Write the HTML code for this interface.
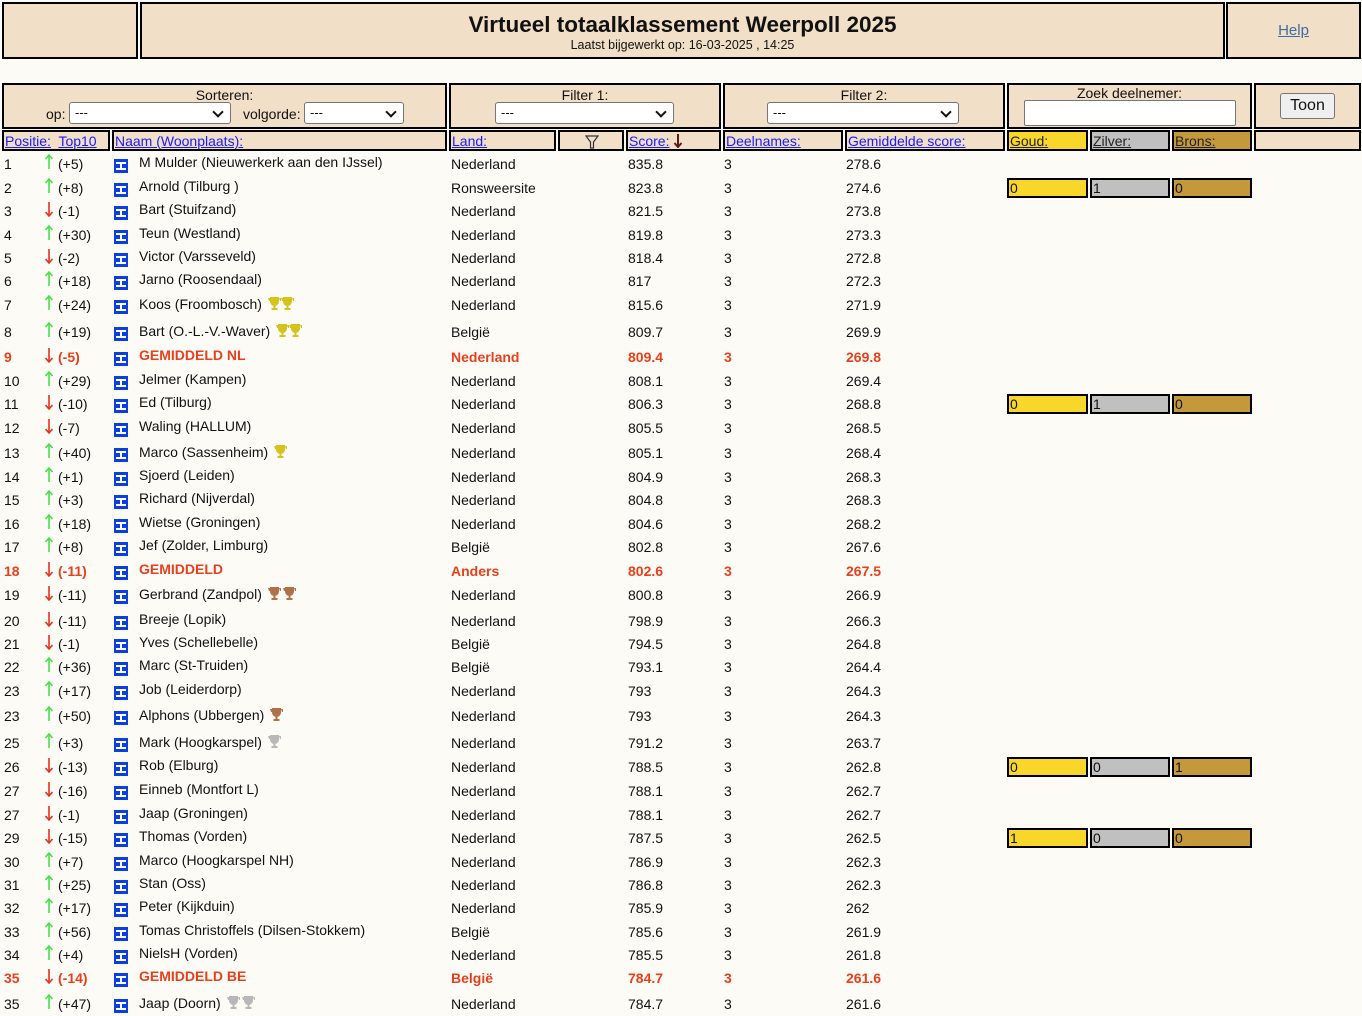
<!DOCTYPE html>
<html><head><meta charset="utf-8">
<style>
*{margin:0;padding:0;box-sizing:border-box}
body{width:1362px;height:1016px;background:#fdfbf6;font-family:"Liberation Sans",Arial,sans-serif;font-size:14px;color:#111;position:relative;overflow:hidden}
.bx{position:absolute;background:#f1dfc7;border:2px solid #000}
.hb{position:absolute;background:#f1dfc7;border:2px solid #000;height:21px;top:130px;padding-left:1px;line-height:19px}
a{color:#1a1aff;text-decoration:underline}
.sel{position:absolute;background:#fff;border:1px solid #767676;border-radius:3px;height:22px;font-size:13px;line-height:20px;padding-left:5px}
.sel:after{content:"";position:absolute;right:8px;top:5px;width:6px;height:6px;border-right:2px solid #111;border-bottom:2px solid #111;transform:rotate(45deg)}
.inp{position:absolute;background:#fff;border:1px solid #767676;border-radius:2px}
.r{position:absolute;left:0;width:1362px;height:20px;line-height:20px}
.r b{font-weight:normal;position:absolute;white-space:nowrap}
.p{left:4px}.c{left:58px}.n{left:139px}.l{left:451px}.s{left:628px}.d{left:724px}.g{left:846px}
.ic{position:absolute;left:114px;top:5px;width:14px;height:14px}
.ar{position:absolute;left:44px;top:0;width:10px;height:16px}
.red{color:#e8401c}.red b{font-weight:bold!important}
.m{position:absolute;border:2px solid #000;height:20px;top:0;line-height:16px;padding-left:1px;font-size:14px}
.m1{left:1007px;width:81px;background:#f9d62a}.m2{left:1090px;width:80px;background:#c0c0c0}.m3{left:1172px;width:80px;background:#c4993c}
.tr{display:inline-block;width:13px;height:15px;vertical-align:-2px;margin-left:2px}
</style></head><body>
<svg width="0" height="0" style="position:absolute">
<defs>
<symbol id="ico" viewBox="0 0 14 14"><rect width="14" height="14" fill="#0b3fe0"/><path d="M2 3h10v2H8v4h4v2H2V9h4V5H2z" fill="#fff"/></symbol>
<symbol id="up" viewBox="0 0 10 16"><path d="M5 1v14M1.5 5L5 1l3.5 4" stroke="#4be04b" stroke-width="1.6" fill="none"/></symbol>
<symbol id="dn" viewBox="0 0 10 16"><path d="M5 1v14M1.5 11L5 15l3.5-4" stroke="#e53322" stroke-width="1.6" fill="none"/></symbol>
<symbol id="tg" viewBox="0 0 13 15"><path d="M2 1h9v4c0 3-2 5-4.5 5S2 8 2 5zM0 2h2v3H1zM11 2h2v3h-1zM5.5 10h2v2h2v2h-6v-2h2z" fill="#d6c21c"/></symbol>
<symbol id="tb" viewBox="0 0 13 15"><path d="M2 1h9v4c0 3-2 5-4.5 5S2 8 2 5zM0 2h2v3H1zM11 2h2v3h-1zM5.5 10h2v2h2v2h-6v-2h2z" fill="#b0704a"/></symbol>
<symbol id="ts" viewBox="0 0 13 15"><path d="M2 1h9v4c0 3-2 5-4.5 5S2 8 2 5zM0 2h2v3H1zM11 2h2v3h-1zM5.5 10h2v2h2v2h-6v-2h2z" fill="#b8b8b8"/></symbol>
</defs></svg>

<div class="bx" style="left:2px;top:2px;width:136px;height:57px"></div>
<div class="bx" style="left:140px;top:2px;width:1085px;height:57px;text-align:center">
<div style="font-size:22.5px;font-weight:bold;margin-top:8px;line-height:26px">Virtueel totaalklassement Weerpoll 2025</div>
<div style="font-size:12.5px;line-height:14px">Laatst bijgewerkt op: 16-03-2025 , 14:25</div></div>
<div class="bx" style="left:1226px;top:2px;width:135px;height:57px;text-align:center;line-height:54px;font-size:15px"><a style="color:#3a6ea5">Help</a></div>

<div class="bx" style="left:2px;top:83px;width:445px;height:46px;text-align:center;line-height:20px;padding-top:0">Sorteren:</div>
<div style="position:absolute;left:46px;top:104px;line-height:20px">op:</div>
<div class="sel" style="left:69px;top:102px;width:162px">---</div>
<div style="position:absolute;left:243px;top:104px;line-height:20px">volgorde:</div>
<div class="sel" style="left:304px;top:102px;width:100px">---</div>
<div class="bx" style="left:449px;top:83px;width:272px;height:46px;text-align:center;line-height:20px;padding-top:0">Filter 1:</div>
<div class="sel" style="left:495px;top:102px;width:179px">---</div>
<div class="bx" style="left:723px;top:83px;width:282px;height:46px;text-align:center;line-height:20px;padding-top:0">Filter 2:</div>
<div class="sel" style="left:767px;top:102px;width:192px">---</div>
<div class="bx" style="left:1007px;top:83px;width:245px;height:46px;text-align:center;line-height:17px">Zoek deelnemer:</div>
<div class="inp" style="left:1024px;top:100px;width:212px;height:26px"></div>
<div class="bx" style="left:1254px;top:83px;width:107px;height:46px"></div>
<div style="position:absolute;left:1280px;top:93px;width:55px;height:26px;background:#efefef;border:1px solid #767676;border-radius:3px;text-align:center;line-height:24px;font-size:16px">Toon</div>

<div class="hb" style="left:2px;width:108px"><a>Positie:</a>&nbsp; <a>Top10</a></div>
<div class="hb" style="left:112px;width:335px"><a>Naam (Woonplaats):</a></div>
<div class="hb" style="left:449px;width:107px"><a>Land:</a></div>
<div class="hb" style="left:558px;width:66px"><svg style="position:absolute;left:25px;top:3px" width="14" height="14" viewBox="0 0 14 14"><path d="M1 1h12L8.5 7v6h-3V7z" fill="none" stroke="#333" stroke-width="1.2"/></svg></div>
<div class="hb" style="left:626px;width:95px"><a>Score:</a> <svg style="vertical-align:-2px" width="10" height="14" viewBox="0 0 10 14"><path d="M5 0v13M1.5 9L5 13l3.5-4" stroke="#5a1b1b" stroke-width="2" fill="none"/></svg></div>
<div class="hb" style="left:723px;width:120px"><a>Deelnames:</a></div>
<div class="hb" style="left:845px;width:160px"><a>Gemiddelde score:</a></div>
<div class="hb" style="left:1007px;width:81px;background:#f9d62a"><a style="color:#222">Goud:</a></div>
<div class="hb" style="left:1090px;width:80px;background:#c0c0c0"><a style="color:#222">Zilver:</a></div>
<div class="hb" style="left:1172px;width:80px;background:#c4993c"><a style="color:#222">Brons:</a></div>
<div class="hb" style="left:1254px;width:107px"></div>

<div class="r" style="top:154px"><b class=p>1</b><svg class=ar><use href="#up"/></svg><b class=c>(+5)</b><svg class=ic><use href="#ico"/></svg><b class=n style="top:-2px">M Mulder (Nieuwerkerk aan den IJssel)</b><b class=l>Nederland</b><b class=s>835.8</b><b class=d>3</b><b class=g>278.6</b></div>
<div class="r" style="top:178px"><b class=p>2</b><svg class=ar><use href="#up"/></svg><b class=c>(+8)</b><svg class=ic><use href="#ico"/></svg><b class=n style="top:-2px">Arnold (Tilburg )</b><b class=l>Ronsweersite</b><b class=s>823.8</b><b class=d>3</b><b class=g>274.6</b><div class="m m1">0</div><div class="m m2">1</div><div class="m m3">0</div></div>
<div class="r" style="top:201px"><b class=p>3</b><svg class=ar><use href="#dn"/></svg><b class=c>(-1)</b><svg class=ic><use href="#ico"/></svg><b class=n style="top:-2px">Bart (Stuifzand)</b><b class=l>Nederland</b><b class=s>821.5</b><b class=d>3</b><b class=g>273.8</b></div>
<div class="r" style="top:225px"><b class=p>4</b><svg class=ar><use href="#up"/></svg><b class=c>(+30)</b><svg class=ic><use href="#ico"/></svg><b class=n style="top:-2px">Teun (Westland)</b><b class=l>Nederland</b><b class=s>819.8</b><b class=d>3</b><b class=g>273.3</b></div>
<div class="r" style="top:248px"><b class=p>5</b><svg class=ar><use href="#dn"/></svg><b class=c>(-2)</b><svg class=ic><use href="#ico"/></svg><b class=n style="top:-2px">Victor (Varsseveld)</b><b class=l>Nederland</b><b class=s>818.4</b><b class=d>3</b><b class=g>272.8</b></div>
<div class="r" style="top:271px"><b class=p>6</b><svg class=ar><use href="#up"/></svg><b class=c>(+18)</b><svg class=ic><use href="#ico"/></svg><b class=n style="top:-2px">Jarno (Roosendaal)</b><b class=l>Nederland</b><b class=s>817</b><b class=d>3</b><b class=g>272.3</b></div>
<div class="r" style="top:295px"><b class=p>7</b><svg class=ar><use href="#up"/></svg><b class=c>(+24)</b><svg class=ic><use href="#ico"/></svg><b class=n style="top:-1px">Koos (Froombosch) <svg class=tr><use href="#tg"/></svg><svg class=tr style="margin-left:0"><use href="#tg"/></svg></b><b class=l>Nederland</b><b class=s>815.6</b><b class=d>3</b><b class=g>271.9</b></div>
<div class="r" style="top:322px"><b class=p>8</b><svg class=ar><use href="#up"/></svg><b class=c>(+19)</b><svg class=ic><use href="#ico"/></svg><b class=n style="top:-1px">Bart (O.-L.-V.-Waver) <svg class=tr><use href="#tg"/></svg><svg class=tr style="margin-left:0"><use href="#tg"/></svg></b><b class=l>België</b><b class=s>809.7</b><b class=d>3</b><b class=g>269.9</b></div>
<div class="r red" style="top:347px"><b class=p>9</b><svg class=ar><use href="#dn"/></svg><b class=c>(-5)</b><svg class=ic><use href="#ico"/></svg><b class=n style="top:-2px">GEMIDDELD NL</b><b class=l>Nederland</b><b class=s>809.4</b><b class=d>3</b><b class=g>269.8</b></div>
<div class="r" style="top:371px"><b class=p>10</b><svg class=ar><use href="#up"/></svg><b class=c>(+29)</b><svg class=ic><use href="#ico"/></svg><b class=n style="top:-2px">Jelmer (Kampen)</b><b class=l>Nederland</b><b class=s>808.1</b><b class=d>3</b><b class=g>269.4</b></div>
<div class="r" style="top:394px"><b class=p>11</b><svg class=ar><use href="#dn"/></svg><b class=c>(-10)</b><svg class=ic><use href="#ico"/></svg><b class=n style="top:-2px">Ed (Tilburg)</b><b class=l>Nederland</b><b class=s>806.3</b><b class=d>3</b><b class=g>268.8</b><div class="m m1">0</div><div class="m m2">1</div><div class="m m3">0</div></div>
<div class="r" style="top:418px"><b class=p>12</b><svg class=ar><use href="#dn"/></svg><b class=c>(-7)</b><svg class=ic><use href="#ico"/></svg><b class=n style="top:-2px">Waling (HALLUM)</b><b class=l>Nederland</b><b class=s>805.5</b><b class=d>3</b><b class=g>268.5</b></div>
<div class="r" style="top:443px"><b class=p>13</b><svg class=ar><use href="#up"/></svg><b class=c>(+40)</b><svg class=ic><use href="#ico"/></svg><b class=n style="top:-1px">Marco (Sassenheim) <svg class=tr><use href="#tg"/></svg></b><b class=l>Nederland</b><b class=s>805.1</b><b class=d>3</b><b class=g>268.4</b></div>
<div class="r" style="top:467px"><b class=p>14</b><svg class=ar><use href="#up"/></svg><b class=c>(+1)</b><svg class=ic><use href="#ico"/></svg><b class=n style="top:-2px">Sjoerd (Leiden)</b><b class=l>Nederland</b><b class=s>804.9</b><b class=d>3</b><b class=g>268.3</b></div>
<div class="r" style="top:490px"><b class=p>15</b><svg class=ar><use href="#up"/></svg><b class=c>(+3)</b><svg class=ic><use href="#ico"/></svg><b class=n style="top:-2px">Richard (Nijverdal)</b><b class=l>Nederland</b><b class=s>804.8</b><b class=d>3</b><b class=g>268.3</b></div>
<div class="r" style="top:514px"><b class=p>16</b><svg class=ar><use href="#up"/></svg><b class=c>(+18)</b><svg class=ic><use href="#ico"/></svg><b class=n style="top:-2px">Wietse (Groningen)</b><b class=l>Nederland</b><b class=s>804.6</b><b class=d>3</b><b class=g>268.2</b></div>
<div class="r" style="top:537px"><b class=p>17</b><svg class=ar><use href="#up"/></svg><b class=c>(+8)</b><svg class=ic><use href="#ico"/></svg><b class=n style="top:-2px">Jef (Zolder, Limburg)</b><b class=l>België</b><b class=s>802.8</b><b class=d>3</b><b class=g>267.6</b></div>
<div class="r red" style="top:561px"><b class=p>18</b><svg class=ar><use href="#dn"/></svg><b class=c>(-11)</b><svg class=ic><use href="#ico"/></svg><b class=n style="top:-2px">GEMIDDELD</b><b class=l>Anders</b><b class=s>802.6</b><b class=d>3</b><b class=g>267.5</b></div>
<div class="r" style="top:585px"><b class=p>19</b><svg class=ar><use href="#dn"/></svg><b class=c>(-11)</b><svg class=ic><use href="#ico"/></svg><b class=n style="top:-1px">Gerbrand (Zandpol) <svg class=tr><use href="#tb"/></svg><svg class=tr><use href="#tb"/></svg></b><b class=l>Nederland</b><b class=s>800.8</b><b class=d>3</b><b class=g>266.9</b></div>
<div class="r" style="top:611px"><b class=p>20</b><svg class=ar><use href="#dn"/></svg><b class=c>(-11)</b><svg class=ic><use href="#ico"/></svg><b class=n style="top:-2px">Breeje (Lopik)</b><b class=l>Nederland</b><b class=s>798.9</b><b class=d>3</b><b class=g>266.3</b></div>
<div class="r" style="top:634px"><b class=p>21</b><svg class=ar><use href="#dn"/></svg><b class=c>(-1)</b><svg class=ic><use href="#ico"/></svg><b class=n style="top:-2px">Yves (Schellebelle)</b><b class=l>België</b><b class=s>794.5</b><b class=d>3</b><b class=g>264.8</b></div>
<div class="r" style="top:657px"><b class=p>22</b><svg class=ar><use href="#up"/></svg><b class=c>(+36)</b><svg class=ic><use href="#ico"/></svg><b class=n style="top:-2px">Marc (St-Truiden)</b><b class=l>België</b><b class=s>793.1</b><b class=d>3</b><b class=g>264.4</b></div>
<div class="r" style="top:681px"><b class=p>23</b><svg class=ar><use href="#up"/></svg><b class=c>(+17)</b><svg class=ic><use href="#ico"/></svg><b class=n style="top:-2px">Job (Leiderdorp)</b><b class=l>Nederland</b><b class=s>793</b><b class=d>3</b><b class=g>264.3</b></div>
<div class="r" style="top:706px"><b class=p>23</b><svg class=ar><use href="#up"/></svg><b class=c>(+50)</b><svg class=ic><use href="#ico"/></svg><b class=n style="top:-1px">Alphons (Ubbergen) <svg class=tr><use href="#tb"/></svg></b><b class=l>Nederland</b><b class=s>793</b><b class=d>3</b><b class=g>264.3</b></div>
<div class="r" style="top:733px"><b class=p>25</b><svg class=ar><use href="#up"/></svg><b class=c>(+3)</b><svg class=ic><use href="#ico"/></svg><b class=n style="top:-1px">Mark (Hoogkarspel) <svg class=tr><use href="#ts"/></svg></b><b class=l>Nederland</b><b class=s>791.2</b><b class=d>3</b><b class=g>263.7</b></div>
<div class="r" style="top:757px"><b class=p>26</b><svg class=ar><use href="#dn"/></svg><b class=c>(-13)</b><svg class=ic><use href="#ico"/></svg><b class=n style="top:-2px">Rob (Elburg)</b><b class=l>Nederland</b><b class=s>788.5</b><b class=d>3</b><b class=g>262.8</b><div class="m m1">0</div><div class="m m2">0</div><div class="m m3">1</div></div>
<div class="r" style="top:781px"><b class=p>27</b><svg class=ar><use href="#dn"/></svg><b class=c>(-16)</b><svg class=ic><use href="#ico"/></svg><b class=n style="top:-2px">Einneb (Montfort L)</b><b class=l>Nederland</b><b class=s>788.1</b><b class=d>3</b><b class=g>262.7</b></div>
<div class="r" style="top:805px"><b class=p>27</b><svg class=ar><use href="#dn"/></svg><b class=c>(-1)</b><svg class=ic><use href="#ico"/></svg><b class=n style="top:-2px">Jaap (Groningen)</b><b class=l>Nederland</b><b class=s>788.1</b><b class=d>3</b><b class=g>262.7</b></div>
<div class="r" style="top:828px"><b class=p>29</b><svg class=ar><use href="#dn"/></svg><b class=c>(-15)</b><svg class=ic><use href="#ico"/></svg><b class=n style="top:-2px">Thomas (Vorden)</b><b class=l>Nederland</b><b class=s>787.5</b><b class=d>3</b><b class=g>262.5</b><div class="m m1">1</div><div class="m m2">0</div><div class="m m3">0</div></div>
<div class="r" style="top:852px"><b class=p>30</b><svg class=ar><use href="#up"/></svg><b class=c>(+7)</b><svg class=ic><use href="#ico"/></svg><b class=n style="top:-2px">Marco (Hoogkarspel NH)</b><b class=l>Nederland</b><b class=s>786.9</b><b class=d>3</b><b class=g>262.3</b></div>
<div class="r" style="top:875px"><b class=p>31</b><svg class=ar><use href="#up"/></svg><b class=c>(+25)</b><svg class=ic><use href="#ico"/></svg><b class=n style="top:-2px">Stan (Oss)</b><b class=l>Nederland</b><b class=s>786.8</b><b class=d>3</b><b class=g>262.3</b></div>
<div class="r" style="top:898px"><b class=p>32</b><svg class=ar><use href="#up"/></svg><b class=c>(+17)</b><svg class=ic><use href="#ico"/></svg><b class=n style="top:-2px">Peter (Kijkduin)</b><b class=l>Nederland</b><b class=s>785.9</b><b class=d>3</b><b class=g>262</b></div>
<div class="r" style="top:922px"><b class=p>33</b><svg class=ar><use href="#up"/></svg><b class=c>(+56)</b><svg class=ic><use href="#ico"/></svg><b class=n style="top:-2px">Tomas Christoffels (Dilsen-Stokkem)</b><b class=l>België</b><b class=s>785.6</b><b class=d>3</b><b class=g>261.9</b></div>
<div class="r" style="top:945px"><b class=p>34</b><svg class=ar><use href="#up"/></svg><b class=c>(+4)</b><svg class=ic><use href="#ico"/></svg><b class=n style="top:-2px">NielsH (Vorden)</b><b class=l>Nederland</b><b class=s>785.5</b><b class=d>3</b><b class=g>261.8</b></div>
<div class="r red" style="top:968px"><b class=p>35</b><svg class=ar><use href="#dn"/></svg><b class=c>(-14)</b><svg class=ic><use href="#ico"/></svg><b class=n style="top:-2px">GEMIDDELD BE</b><b class=l>België</b><b class=s>784.7</b><b class=d>3</b><b class=g>261.6</b></div>
<div class="r" style="top:994px"><b class=p>35</b><svg class=ar><use href="#up"/></svg><b class=c>(+47)</b><svg class=ic><use href="#ico"/></svg><b class=n style="top:-1px">Jaap (Doorn) <svg class=tr><use href="#ts"/></svg><svg class=tr><use href="#ts"/></svg></b><b class=l>Nederland</b><b class=s>784.7</b><b class=d>3</b><b class=g>261.6</b></div>
</body></html>
